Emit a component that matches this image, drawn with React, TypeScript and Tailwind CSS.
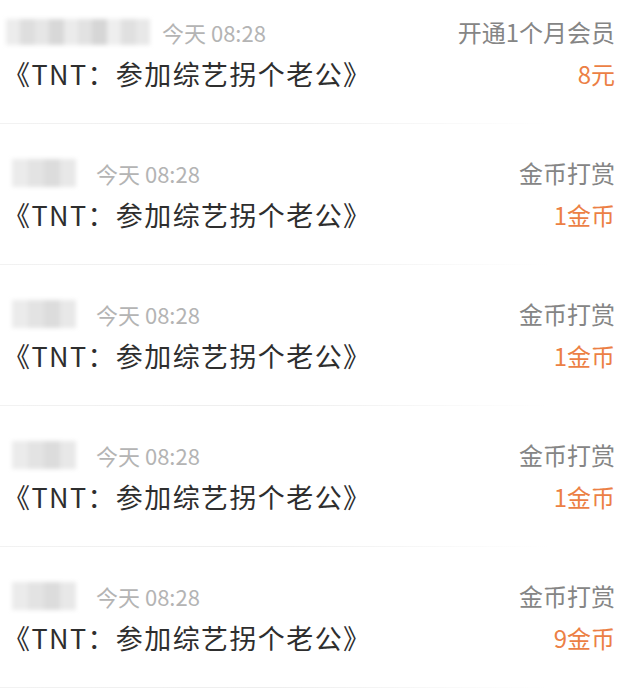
import React from 'react';

type Item = {
  nameWide: boolean;
  label: string;
  amount: string;
};

const items: Item[] = [
  { nameWide: true, label: '开通1个月会员', amount: '8元' },
  { nameWide: false, label: '金币打赏', amount: '1金币' },
  { nameWide: false, label: '金币打赏', amount: '1金币' },
  { nameWide: false, label: '金币打赏', amount: '1金币' },
  { nameWide: false, label: '金币打赏', amount: '9金币' },
];

const wideShades = ['#ececec', '#dedede', '#e6e6e6', '#d8d8d8', '#ebebeb', '#e2e2e2', '#d6d6d6', '#eeeeee', '#e0e0e0', '#e8e8e8'];
const narrowShades = ['#ebebeb', '#e3e3e3', '#dcdcdc', '#e8e8e8'];

// pixelated nickname placeholder
const BlurName = ({ wide }: { wide: boolean }) => {
  const shades = wide ? wideShades : narrowShades;
  return (
    <div className={wide ? 'ml-[6px] flex h-[26px] w-[144px] blur-[2px]' : 'ml-[12px] flex h-[28px] w-[64px] blur-[2px]'}>
      {shades.map((c, i) => (
        <div key={i} className="h-full flex-1" style={{ backgroundColor: c }} />
      ))}
    </div>
  );
};

const Row = ({ item }: { item: Item }) => (
  <div className="h-[141px] pt-[18px]">
    <div className="flex items-center justify-between pr-[25px]">
      <div className="flex items-center">
        <BlurName wide={item.nameWide} />
        <span className={item.nameWide ? 'ml-[12px] text-[22px] leading-[28px] text-[#b4b4b4]' : 'ml-[20px] text-[22px] leading-[28px] text-[#b4b4b4]'}>
          今天 08:28
        </span>
      </div>
      <span className="text-[24px] leading-[28px] text-[#858585]">{item.label}</span>
    </div>
    <div className="mt-[10px] flex items-center justify-between pr-[25px]">
      <span className="pl-[3px] text-[27px] leading-[36px] tracking-[1.4px] text-[#2e2e2e]">《TNT：参加综艺拐个老公》</span>
      <span className="text-[24px] leading-[36px] text-[#ec7f45]">{item.amount}</span>
    </div>
    <div className="mt-[31px] h-px w-[550px] bg-gradient-to-r from-[#f2f2f2] via-[#eeeeee] to-white" />
  </div>
);

export default function App() {
  return (
    <div className="h-[689px] w-[640px] overflow-hidden bg-white font-['Noto_Sans_CJK_SC','Noto_Sans',sans-serif]">
      {items.map((item, i) => (
        <Row key={i} item={item} />
      ))}
    </div>
  );
}
